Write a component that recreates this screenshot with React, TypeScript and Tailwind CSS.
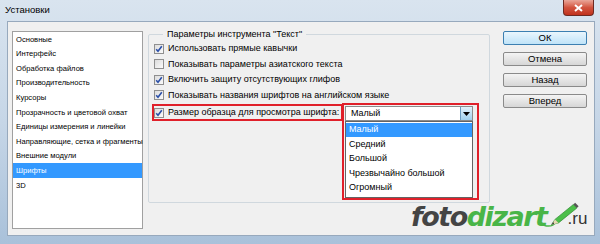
import React from "react";

function Check({ checked }: { checked: boolean }) {
  return (
    <span className="w-[10px] h-[10px] border border-[#8f8f8f] bg-gradient-to-br from-[#dcdcdc] to-[#fbfbfb] flex items-center justify-center shrink-0">
      {checked && (
        <svg width="8" height="8" viewBox="0 0 8 8">
          <path d="M1.2 4.2 L3 6.2 L6.8 1.2" stroke="#2a4fa8" strokeWidth="1.6" fill="none" />
        </svg>
      )}
    </span>
  );
}

function Btn({ label, def }: { label: string; def?: boolean }) {
  return (
    <div
      className={
        "h-[14px] w-[84px] rounded-[2px] border flex items-center justify-center text-[9.5px] text-black " +
        (def
          ? "border-[#3c7fb1] bg-gradient-to-b from-[#eaf6fd] to-[#bfe3f8]"
          : "border-[#8a8a8a] bg-gradient-to-b from-[#f4f4f4] to-[#d6d6d6]")
      }
    >
      {label}
    </div>
  );
}

export default function App() {
  const items = [
    "Основные",
    "Интерфейс",
    "Обработка файлов",
    "Производительность",
    "Курсоры",
    "Прозрачность и цветовой охват",
    "Единицы измерения и линейки",
    "Направляющие, сетка и фрагменты",
    "Внешние модули",
    "Шрифты",
    "3D",
  ];
  const rows: [boolean, string][] = [
    [true, "Использовать прямые кавычки"],
    [false, "Показывать параметры азиатского текста"],
    [true, "Включить защиту отсутствующих глифов"],
    [true, "Показывать названия шрифтов на английском языке"],
  ];
  const sizes = ["Малый", "Средний", "Большой", "Чрезвычайно большой", "Огромный"];
  return (
    <div className="w-[600px] h-[244px] flex flex-col bg-gradient-to-b from-[#d9e4ef] via-[#c6d6e7] to-[#a9c1da] font-['Liberation_Sans',sans-serif] overflow-hidden relative">
      {/* title bar */}
      <div className="h-[21px] flex items-center pl-[5px] relative shrink-0">
        <span className="text-[9.5px] text-black">Установки</span>
        <div className="absolute top-0 right-[6px] w-[31px] h-[16px] rounded-b-[4px] border border-t-0 border-[#6d2a22] bg-gradient-to-b from-[#e9a699] via-[#d2543f] to-[#c0311c] flex items-center justify-center">
          <svg width="9" height="8" viewBox="0 0 9 8">
            <path d="M1 1 L8 7 M8 1 L1 7" stroke="#fff" strokeWidth="2" />
          </svg>
        </div>
      </div>
      {/* client area */}
      <div className="flex-1 ml-[7px] mr-[5px] mb-[8px] bg-[#f0f0f0] border border-[#97a9bd] flex pl-[4px] pt-[9px] relative">
        {/* category list */}
        <div className="w-[131px] h-[198px] bg-white border border-[#a0a0a0] flex flex-col pt-0 shrink-0">
          {items.map((it) => (
            <div
              key={it}
              className={
                "h-[14.6px] flex items-center pl-[3px] text-[7.6px] whitespace-nowrap " +
                (it === "Шрифты" ? "bg-[#3399ff] text-white" : "text-black")
              }
            >
              {it}
            </div>
          ))}
        </div>
        {/* group box */}
        <fieldset className="ml-[5px] -mt-[3px] w-[342px] h-[175px] border border-[#d0d8de] rounded-[2px] pl-[5px] pt-[1px] relative shrink-0">
          <legend className="ml-[9px] px-[4px] text-[9px] leading-[12px] text-black">Параметры инструмента "Текст"</legend>
          <div className="flex flex-col">
            {rows.map(([c, t]) => (
              <div key={t} className="h-[15.5px] flex items-center gap-[4px] text-[9px] text-black whitespace-nowrap">
                <Check checked={c} />
                {t}
              </div>
            ))}
            <div className="-ml-[2px] mt-[1px] w-[191px] h-[17px] border-2 border-[#e0202a] flex items-center gap-[4px] text-[9px] text-black whitespace-nowrap">
              <Check checked={true} />
              Размер образца для просмотра шрифта:
            </div>
          </div>
          {/* open dropdown */}
          <div className="absolute left-[193px] top-[63px] w-[137px] h-[97px] border-2 border-[#e0202a] p-[1px] flex flex-col">
            <div className="w-[128px] h-[15px] bg-white border border-[#8b8b8b] flex items-center shrink-0">
              <span className="flex-1 pl-[5px] text-[9px] text-black">Малый</span>
              <div className="w-[12px] h-full bg-gradient-to-b from-[#e3f2fb] to-[#9fd0ee] border-l border-[#6b9cc0] flex items-center justify-center">
                <svg width="7" height="4" viewBox="0 0 7 4">
                  <path d="M0 0 H7 L3.5 4 Z" fill="#000" />
                </svg>
              </div>
            </div>
            <div className="w-[128px] bg-white border border-[#646464] flex flex-col pt-[1px] pb-[2px]">
              {sizes.map((s, i) => (
                <div
                  key={s}
                  className={
                    "h-[14.4px] flex items-center pl-[3px] text-[9px] whitespace-nowrap " +
                    (i === 0 ? "bg-[#3399ff] text-white" : "text-black")
                  }
                >
                  {s}
                </div>
              ))}
            </div>
          </div>
        </fieldset>
        {/* buttons */}
        <div className="ml-[13px] flex flex-col gap-[7px] shrink-0">
          <Btn label="ОК" def />
          <Btn label="Отмена" />
          <Btn label="Назад" />
          <Btn label="Вперед" />
        </div>
        {/* watermark */}
        <div className="absolute left-[403px] top-[179px] flex items-end">
          <span className="text-[27px] leading-[31px] font-bold italic tracking-[-1.5px] text-[#444444] font-['DejaVu_Sans',sans-serif]">foto</span>
          <span className="text-[27px] leading-[31px] font-bold italic tracking-[-1.5px] text-[#49b548] font-['DejaVu_Sans',sans-serif]">dizart</span>
          <svg width="36" height="28" viewBox="0 0 40 32" className="-ml-[3px] mb-[3px]">
            <path d="M0 28 C8 30 14 26 10 24" stroke="#49b548" strokeWidth="1.5" fill="none" />
            <path d="M8 27 L12 21 L33 4 L37 8 L16 25 Z" fill="#4cbf4a" stroke="#2e8a31" strokeWidth="0.8" />
            <path d="M8 27 L12 21 L16 25 Z" fill="#e9d7b3" />
            <path d="M8 27 L10 24 L11 26 Z" fill="#333" />
            <path d="M33 4 L35 2 L39 6 L37 8 Z" fill="#555" />
          </svg>
          <span className="text-[17px] leading-[20px] text-[#333333] -ml-[12px] mb-[3px] font-['Liberation_Sans',sans-serif]">.ru</span>
        </div>
      </div>
    </div>
  );
}
